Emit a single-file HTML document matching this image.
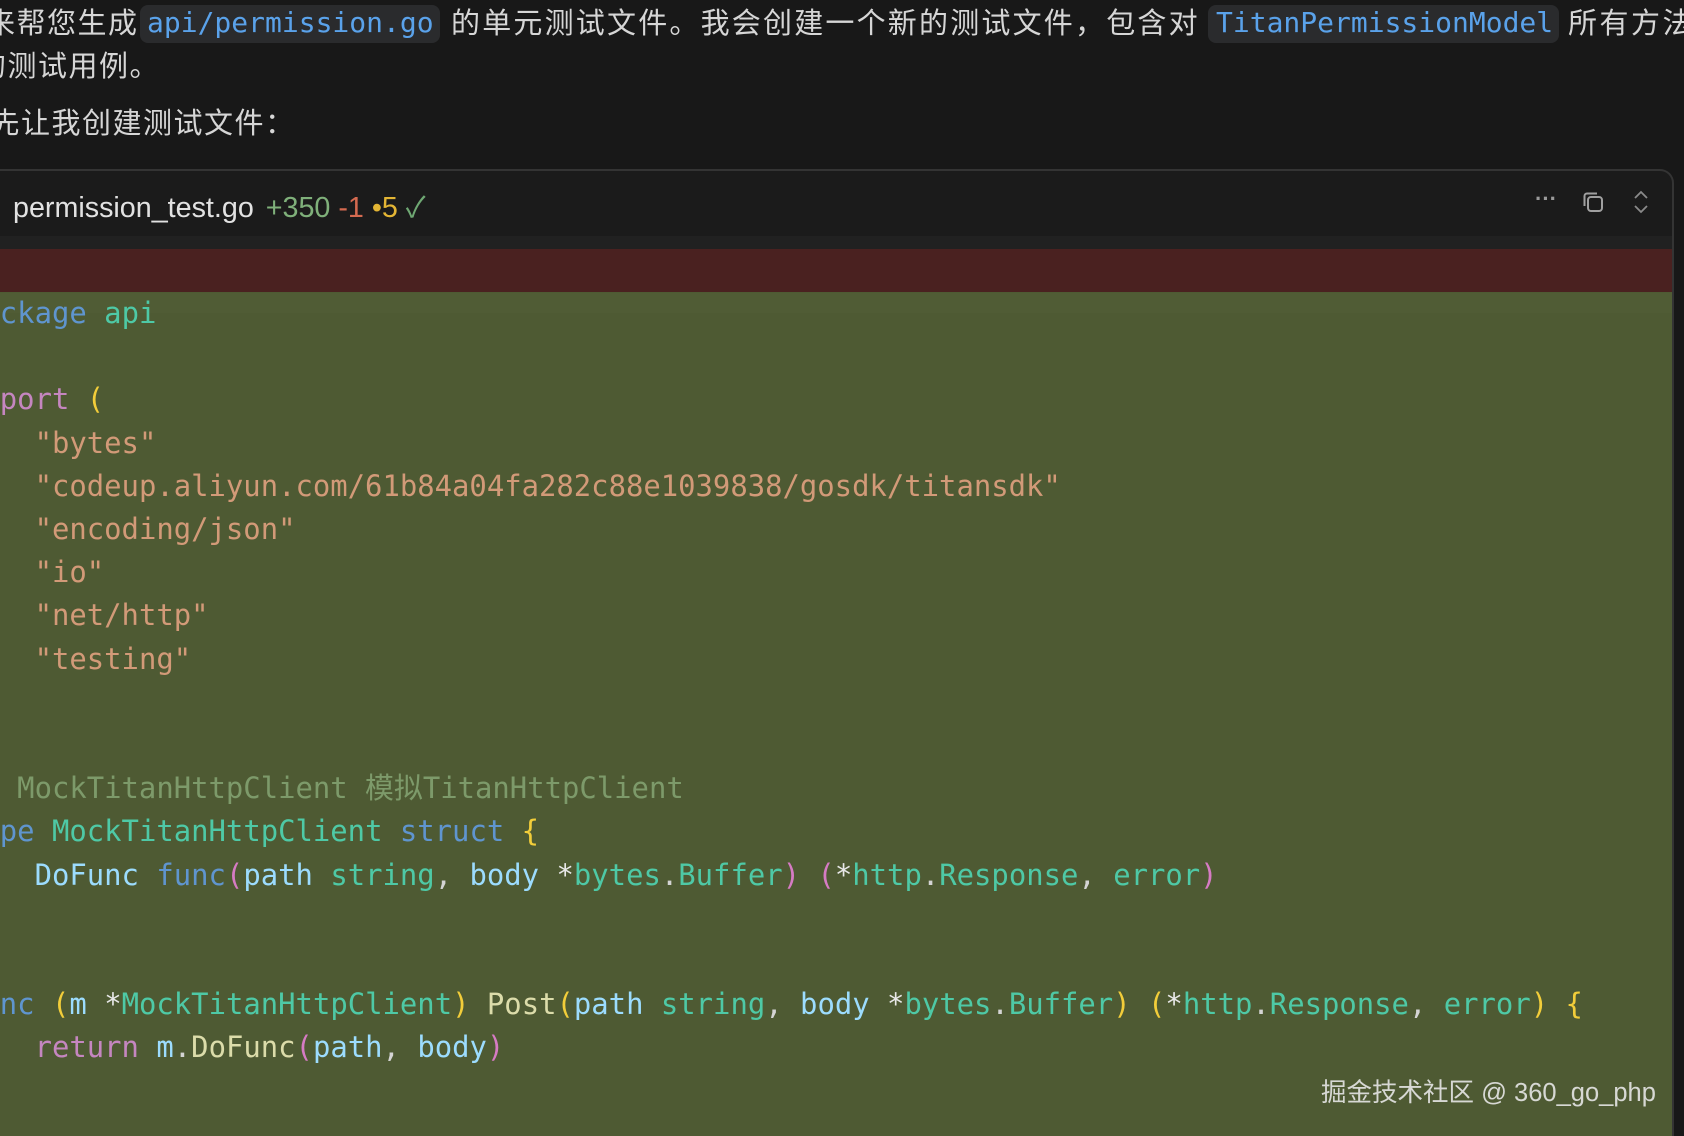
<!DOCTYPE html>
<html><head><meta charset="utf-8"><style>
html,body{margin:0;padding:0;width:1684px;height:1136px;overflow:hidden}
body{background:#181818;position:relative;font-family:"Liberation Sans","Noto Sans CJK SC",sans-serif;color:#d6d6d6}
.t{position:absolute;font-size:29px;white-space:nowrap;letter-spacing:1.5px;line-height:40px}
.pill{position:absolute;background:#2a2b2d;border-radius:8px;height:38px}
.pc{position:absolute;font-family:"DejaVu Sans Mono","Liberation Mono",monospace;font-size:28px;color:#5aa2ea;white-space:nowrap;line-height:40px;letter-spacing:0}
.card{position:absolute;left:-20px;top:169px;width:1694px;height:967px;border:2px solid #343434;border-bottom:none;border-radius:14px 14px 0 0;background:#1b1b1b;overflow:hidden;box-sizing:border-box}
.code{position:absolute;left:-35px;top:292px;font-family:"DejaVu Sans Mono","Liberation Mono",monospace;font-size:28.9px;line-height:43.2px;white-space:pre;color:#d4d4d4}
.kw{color:#5f95cf}.ty{color:#4ec9a6}.st{color:#d29a78}.cm{color:#7d9a6a}.pk{color:#c586c0}.fn{color:#dcdcaa}.v{color:#9cdcfe}.y{color:#f2cd3a}.p{color:#d67bc4}.w{color:#e8e8e8}
</style></head><body>
<div class="t" style="left:-14px;top:4px">来帮您生成</div>
<div class="pill" style="left:140px;top:5px;width:300px"></div>
<div class="pc" style="left:147px;top:3px">api/permission.go</div>
<div class="t" style="left:451px;top:4px;letter-spacing:2.2px">的单元测试文件。我会创建一个新的测试文件，包含对</div>
<div class="pill" style="left:1208px;top:5px;width:351px"></div>
<div class="pc" style="left:1216px;top:3px">TitanPermissionModel</div>
<div class="t" style="left:1568px;top:4px;letter-spacing:2.5px">所有方法</div>
<div class="t" style="left:-23px;top:47px">的测试用例。</div>
<div class="t" style="left:-40px;top:104px">首先让我创建测试文件：</div>

<div class="card">
  <div style="position:absolute;left:0;top:65px;width:100%;height:13px;background:#212121"></div>
  <div style="position:absolute;left:0;top:78px;width:100%;height:43px;background:#4a2120"></div>
  <div style="position:absolute;left:0;top:121px;width:100%;height:900px;background:#4e5a33"></div>
  <div style="position:absolute;left:0;top:122px;width:100%;height:20px;background:#525e37;opacity:.5"></div>
</div>
<div style="position:absolute;left:13px;top:185px;font-size:28.7px;white-space:nowrap;color:#e2e2e2">permission_test.go <span style="color:#7fb07a;margin-left:4px">+350</span> <span style="color:#d46a50">-1</span> <span style="color:#e3b534">•5</span> <span style="color:#6fa873">✓</span></div>
<div style="position:absolute;left:1535px;top:186px;font-size:22px;color:#9a9a9a;font-weight:bold">···</div>
<svg style="position:absolute;left:1581px;top:190px" width="24" height="24" viewBox="0 0 24 24" fill="none" stroke="#a0a0a0" stroke-width="2"><rect x="7" y="7" width="14" height="14" rx="3"/><path d="M16 3.5 H6 a2.5 2.5 0 0 0 -2.5 2.5 V16"/></svg>
<svg style="position:absolute;left:1632px;top:190px" width="18" height="24" viewBox="0 0 18 24" fill="none" stroke="#8a8a8a" stroke-width="1.8"><path d="M3 8 L9 2 L15 8 M3 16 L9 22 L15 16"/></svg>

<div class="code"><span class="kw">package</span> <span class="ty">api</span>

<span class="pk">import</span> <span class="y">(</span>
    <span class="st">"bytes"</span>
    <span class="st">"codeup.aliyun.com/61b84a04fa282c88e1039838/gosdk/titansdk"</span>
    <span class="st">"encoding/json"</span>
    <span class="st">"io"</span>
    <span class="st">"net/http"</span>
    <span class="st">"testing"</span>


<span class="cm">// MockTitanHttpClient 模拟TitanHttpClient</span>
<span class="kw">type</span> <span class="ty">MockTitanHttpClient</span> <span class="kw">struct</span> <span class="y">{</span>
    <span class="v">DoFunc</span> <span class="kw">func</span><span class="p">(</span><span class="v">path</span> <span class="ty">string</span>, <span class="v">body</span> <span class="w">*</span><span class="ty">bytes</span>.<span class="ty">Buffer</span><span class="p">)</span> <span class="p">(</span><span class="w">*</span><span class="ty">http</span>.<span class="ty">Response</span>, <span class="ty">error</span><span class="p">)</span>


<span class="kw">func</span> <span class="y">(</span><span class="v">m</span> <span class="w">*</span><span class="ty">MockTitanHttpClient</span><span class="y">)</span> <span class="fn">Post</span><span class="y">(</span><span class="v">path</span> <span class="ty">string</span>, <span class="v">body</span> <span class="w">*</span><span class="ty">bytes</span>.<span class="ty">Buffer</span><span class="y">)</span> <span class="y">(</span><span class="w">*</span><span class="ty">http</span>.<span class="ty">Response</span>, <span class="ty">error</span><span class="y">)</span> <span class="y">{</span>
    <span class="pk">return</span> <span class="v">m</span>.<span class="fn">DoFunc</span><span class="p">(</span><span class="v">path</span>, <span class="v">body</span><span class="p">)</span></div>

<div style="position:absolute;left:1321px;top:1072px;font-size:25.5px;color:#e6e6e6;white-space:nowrap;opacity:.9">掘金技术社区 @ 360_go_php</div>
</body></html>
